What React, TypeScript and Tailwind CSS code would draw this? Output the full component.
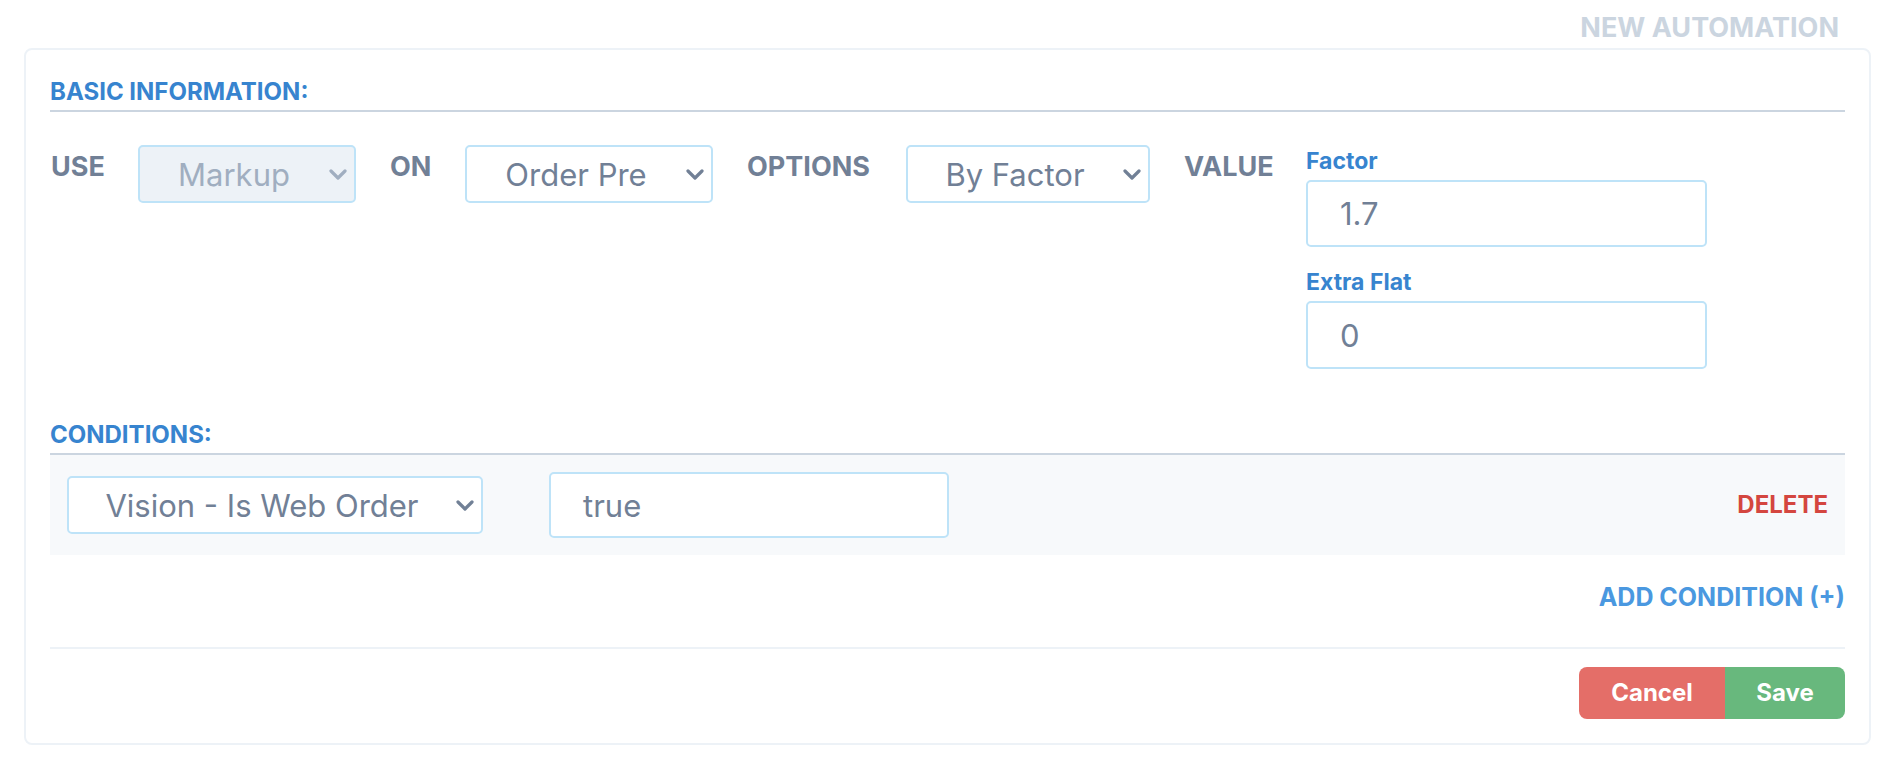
import React from "react";

const FONT = { fontFamily: "Inter, 'Liberation Sans', Arial, sans-serif" };

function Chevron({ color }: { color: string }) {
  return (
    <svg viewBox="0 0 18 11" className="w-[18px] h-[11px] shrink-0" fill="none">
      <path d="M2 2l7 7 7-7" stroke={color} strokeWidth="3.2" strokeLinecap="round" strokeLinejoin="round" />
    </svg>
  );
}

function Select({
  value,
  width,
  disabled,
}: {
  value: string;
  width: string;
  disabled?: boolean;
}) {
  return (
    <div
      className={`${width} h-[58px] shrink-0 flex items-center rounded-[5px] border-2 border-[#bee3f8] ${
        disabled ? "bg-[#edf2f7] text-[#a0aec0]" : "bg-white text-[#718096]"
      }`}
    >
      <span className="flex-1 text-center text-[31px] leading-none whitespace-nowrap">{value}</span>
      <span className="mr-[7px] ml-[1px] flex items-center">
        <Chevron color={disabled ? "#a0aec0" : "#718096"} />
      </span>
    </div>
  );
}

function Input({ value, width, height }: { value: string; width: string; height: string }) {
  return (
    <div
      className={`${width} ${height} shrink-0 flex items-center rounded-[5px] border-2 border-[#bee3f8] bg-white pl-[32px] text-[31px] leading-none text-[#718096]`}
    >
      {value}
    </div>
  );
}

function Label({ children, width }: { children: React.ReactNode; width: string }) {
  return (
    <div
      className={`${width} mt-[8px] shrink-0 pl-[1px] text-[27px] font-bold leading-none text-[#718096] whitespace-nowrap`}
    >
      {children}
    </div>
  );
}

function SectionHeader({ children }: { children: React.ReactNode }) {
  return (
    <div className="border-b-2 border-[#cbd5e0] pb-[6px]">
      <div className="text-[24px] font-bold leading-none text-[#3784cf]">{children}</div>
    </div>
  );
}

export default function App() {
  return (
    <div className="min-h-[782px] bg-white pl-[24px] pr-[27px]" style={FONT}>
      <div className="h-[48px] flex justify-end pt-[14px] pr-[32px]">
        <div className="text-[27px] font-bold leading-none text-[#cbd5e0]">NEW AUTOMATION</div>
      </div>
      <div className="rounded-[8px] border-2 border-[#edf2f7] px-[24px] pt-[30px] pb-[24px]">
        <SectionHeader>BASIC INFORMATION:</SectionHeader>

        <div className="mt-[33px] flex items-start gap-[33px]">
          <Label width="w-[55px]">USE</Label>
          <Select value="Markup" width="w-[218px]" disabled />
          <Label width="w-[43px]">ON</Label>
          <Select value="Order Pre" width="w-[248px]" />
          <Label width="w-[127px]">OPTIONS</Label>
          <Select value="By Factor" width="w-[244px]" />
          <Label width="w-[90px]">VALUE</Label>
          <div className="flex w-[401px] flex-col">
            <div className="mt-[5px] text-[23px] font-bold leading-none text-[#3784cf]">Factor</div>
            <div className="mt-[7px]">
              <Input value="1.7" width="w-[401px]" height="h-[67px]" />
            </div>
            <div className="mt-[24px] text-[23px] font-bold leading-none text-[#3784cf]">Extra Flat</div>
            <div className="mt-[7px]">
              <Input value="0" width="w-[401px]" height="h-[68px]" />
            </div>
          </div>
        </div>

        <div className="mt-[54px]">
          <SectionHeader>CONDITIONS:</SectionHeader>
        </div>

        <div className="flex h-[100px] items-center bg-[#f7f9fb] px-[17px]">
          <Select value="Vision - Is Web Order" width="w-[416px]" />
          <div className="ml-[66px]">
            <Input value="true" width="w-[400px]" height="h-[66px]" />
          </div>
          <div className="ml-auto text-[24px] font-bold leading-none text-[#d4463f]">DELETE</div>
        </div>

        <div className="mt-[30px] flex justify-end">
          <div className="text-[25px] font-bold leading-none text-[#4a98e0]">ADD CONDITION (+)</div>
        </div>

        <div className="mt-[37px] border-t-2 border-[#edf2f7]" />

        <div className="mt-[18px] flex justify-end">
          <div className="flex h-[52px] overflow-hidden rounded-[8px] text-[24px] font-bold leading-none text-white">
            <div className="flex w-[146px] items-center justify-center bg-[#e46e68]">Cancel</div>
            <div className="flex w-[120px] items-center justify-center bg-[#68b87d]">Save</div>
          </div>
        </div>
      </div>
    </div>
  );
}
